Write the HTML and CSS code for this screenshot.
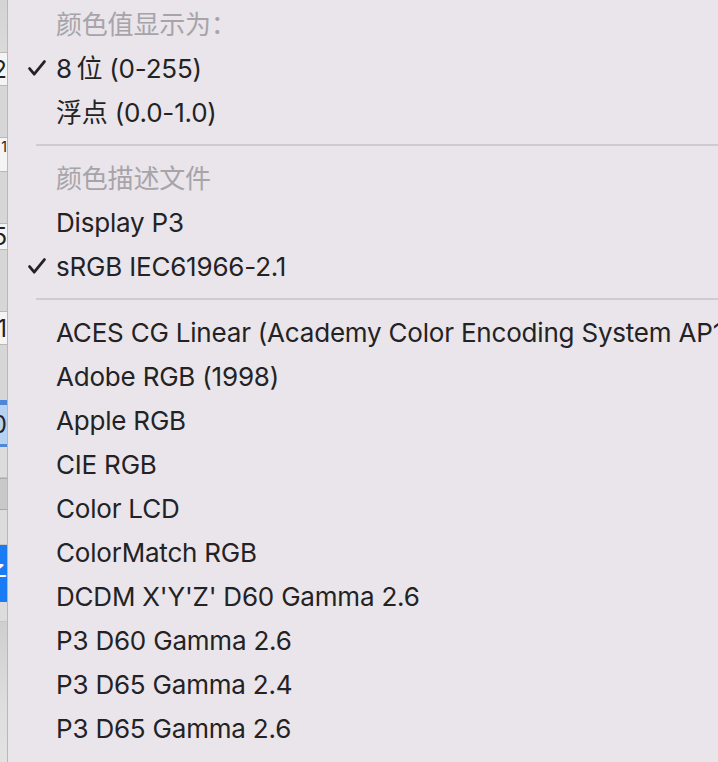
FILE: index.html
```html
<!DOCTYPE html>
<html lang="zh-CN">
<head>
<meta charset="utf-8">
<link rel="stylesheet" href="styles.css">
</head>
<body>
<div class="screen">
  <div class="strip">
    <div class="s-gray s-top"></div>
    <div class="s-field h34"><span>2</span></div>
    <div class="s-gray h51"></div>
    <div class="s-field h35 s-small"><span>1</span></div>
    <div class="s-gray h51"></div>
    <div class="s-field h27"><span>25</span></div>
    <div class="s-gray h61"></div>
    <div class="s-field h34"><span>1</span></div>
    <div class="s-gray h55"></div>
    <div class="s-selbar"></div>
    <div class="s-sel"><span>00</span></div>
    <div class="s-selbar thin"></div>
    <div class="s-light h31"></div>
    <div class="s-btn"></div>
    <div class="s-light h35"></div>
    <div class="s-blue"><span>存子</span></div>
    <div class="s-light h20"></div>
    <div class="s-grad"></div>
  </div>
  <div class="menu">
    <div class="item header">颜色值显示为：</div>
    <div class="item"><svg class="check" viewBox="0 0 18 16" width="18" height="16"><path d="M1.6 8.6 L6.2 14.2 L16.4 1.6" /></svg>8&#8201;位 (0-255)</div>
    <div class="item">浮点 (0.0-1.0)</div>
    <div class="sep"></div>
    <div class="item header">颜色描述文件</div>
    <div class="item">Display P3</div>
    <div class="item"><svg class="check" viewBox="0 0 18 16" width="18" height="16"><path d="M1.6 8.6 L6.2 14.2 L16.4 1.6" /></svg>sRGB IEC61966-2.1</div>
    <div class="sep"></div>
    <div class="item">ACES CG Linear (Academy Color Encoding System AP1)</div>
    <div class="item">Adobe RGB (1998)</div>
    <div class="item">Apple RGB</div>
    <div class="item">CIE RGB</div>
    <div class="item">Color LCD</div>
    <div class="item">ColorMatch RGB</div>
    <div class="item">DCDM X'Y'Z' D60 Gamma 2.6</div>
    <div class="item">P3 D60 Gamma 2.6</div>
    <div class="item">P3 D65 Gamma 2.4</div>
    <div class="item">P3 D65 Gamma 2.6</div>
  </div>
</div>
</body>
</html>
```
FILE: styles.css
```css
html, body {
  margin: 0;
  padding: 0;
  width: 718px;
  height: 762px;
  overflow: hidden;
  background: #e9e5ea;
}
.screen {
  display: flex;
  width: 718px;
  height: 762px;
  overflow: hidden;
}
.strip {
  width: 7px;
  flex: none;
  display: flex;
  flex-direction: column;
  overflow: hidden;
  border-right: 1px solid #b9b7ba;
  font-family: Inter, "Noto Sans CJK SC", sans-serif;
  font-size: 24px;
  color: #222;
}
.strip > div { flex: none; display: flex; justify-content: flex-end; align-items: center; overflow: hidden; }
.strip span { white-space: nowrap; flex: none; }
.s-gray { background: #d6d6d6; }
.s-top { height: 52px; background: linear-gradient(#d4d4d4, #dadada); }
.h51 { height: 51px; }
.h61 { height: 61px; }
.h55 { height: 55px; }
.h31 { height: 31px; }
.h35 { height: 35px; }
.h20 { height: 20px; }
.h34 { height: 34px; }
.h27 { height: 27px; }
.s-field {
  background: #f4f4f4;
  border-top: 1px solid #b9b9b9;
  border-bottom: 1px solid #b9b9b9;
  box-sizing: border-box;
}
.s-small span { font-size: 14px; transform: translateY(-8px); }
.s-selbar { height: 5px; background: #4d88d8; }
.s-selbar.thin { height: 3px; }
.s-sel { height: 39px; background: #b8d2f1; }
.s-light { background: #dcdcdc; border-bottom: 1px solid #c6c6c6; box-sizing: border-box; }
.s-btn { height: 32px; background: #c9c9c9; border-top: 1px solid #a9a9a9; border-bottom: 1px solid #a9a9a9; box-sizing: border-box; }
.s-blue { height: 57px; background: #1a7cf4; color: #fff; }
.s-blue span { font-size: 26px; }
.s-grad { flex: 1 1 auto !important; height: 200px; background: linear-gradient(#cfcfcf, #dedede 60%, #e2e2e2); }

.menu {
  flex: 1 1 auto;
  min-width: 0;
  background: #e9e5ea;
  padding-top: 2px;
  font-family: Inter, "Noto Sans CJK SC", sans-serif;
  font-size: 26px;
  color: #232224;
  letter-spacing: -0.2px;
  overflow: hidden;
}
.item {
  position: relative;
  height: 44px;
  line-height: 46px;
  padding-left: 48px;
  white-space: nowrap;
}
.header { color: #a7a4a9; }
.check {
  position: absolute;
  left: 20px;
  top: 14px;
  fill: none;
  stroke: #232224;
  stroke-width: 2.8;
  stroke-linecap: round;
  stroke-linejoin: round;
}
.sep {
  height: 22px;
  display: flex;
  align-items: center;
  padding-left: 28px;
}
.sep::after {
  content: "";
  flex: 1;
  height: 2px;
  background: #cfcbd0;
}
```
